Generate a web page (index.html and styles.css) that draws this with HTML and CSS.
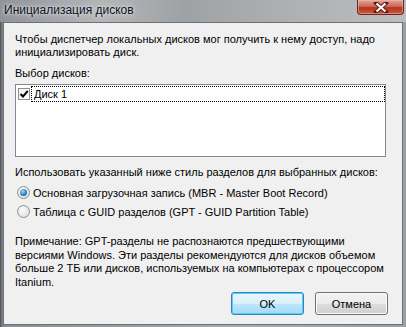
FILE: index.html
```html
<!DOCTYPE html>
<html lang="ru">
<head>
    <meta charset="UTF-8">
    <title>Инициализация дисков</title>
    <link rel="stylesheet" href="styles.css">
</head>
<body>

<div class="window">
    <div class="titlebar">
        <span class="title">Инициализация дисков</span>
        <div class="close-btn">
            <svg width="16" height="11" viewBox="0 0 16 11">
                <path d="M3 1 L13 10 M13 1 L3 10" stroke="#5a1a14" stroke-width="4" stroke-linecap="square"/>
                <path d="M3.5 1.5 L12.5 9.5 M12.5 1.5 L3.5 9.5" stroke="#fff" stroke-width="2.2"/>
            </svg>
        </div>
    </div>

    <div class="client">
        <p class="intro">Чтобы диспетчер локальных дисков мог получить к нему доступ, надо инициализировать диск.</p>

        <div class="label">Выбор дисков:</div>
        <div class="listbox">
            <div class="list-item">
                <span class="checkbox">
                    <svg width="10" height="10" viewBox="0 0 10 10">
                        <path d="M1.5 5 L4 7.5 L8.8 1.8" stroke="#000" stroke-width="2" fill="none"/>
                    </svg>
                </span>
                <span class="item-text">Диск 1</span>
            </div>
        </div>

        <div class="label style-label">Использовать указанный ниже стиль разделов для выбранных дисков:</div>
        <div class="radios">
            <label class="radio-row"><span class="radio checked"></span>Основная загрузочная запись (MBR - Master Boot Record)</label>
            <label class="radio-row"><span class="radio"></span>Таблица с GUID разделов (GPT - GUID Partition Table)</label>
        </div>

        <p class="note">Примечание: GPT-разделы не распознаются предшествующими версиями Windows. Эти разделы рекомендуются для дисков объемом больше 2 ТБ или дисков, используемых на компьютерах с процессором Itanium.</p>

        <div class="buttons">
            <button class="btn btn-default">OK</button>
            <button class="btn">Отмена</button>
        </div>
    </div>
</div>

</body>
</html>
```

FILE: styles.css
```css
body {
    margin: 0;
    padding: 0;
    width: 406px;
    height: 327px;
    overflow: hidden;
    font-family: "Liberation Sans", Arial, sans-serif;
    font-size: 11px;
    color: #000;
}
.window {
    width: 406px;
    height: 327px;
    box-sizing: border-box;
    padding: 0 3px 2px 3px;
    background: linear-gradient(90deg, #4f5257 0px, #8a8d92 3px, #a9abae 60%, #9c9ea2 100%);
    display: flex;
    flex-direction: column;
}
.titlebar {
    height: 22px;
    display: flex;
    align-items: flex-start;
    justify-content: space-between;
    background: linear-gradient(90deg, #8f9297 0%, #b4b6b8 25%, #9fa2a4 45%, #adafb0 70%, #bcbdbe 100%);
    margin: 0 -3px;
    padding: 0 2px 0 4px;
}
.title {
    margin-top: 3px;
    font-size: 12px;
    color: #10101a;
    text-shadow: 0 0 6px #dfe3e8, 0 0 3px #e8ebee;
}
.close-btn {
    width: 47px;
    height: 15px;
    box-sizing: border-box;
    border: 1px solid #5e2a24;
    border-top: none;
    border-radius: 0 0 4px 4px;
    background: linear-gradient(180deg, #e0a195 0%, #cf6a5a 45%, #b4321f 55%, #cd5a3c 100%);
    box-shadow: inset 0 0 0 1px rgba(255, 200, 190, 0.45);
    display: flex;
    align-items: center;
    justify-content: center;
}
.client {
    flex: 1;
    background-color: #f0f0f0;
    border: 1px solid #6d7075;
    padding: 10px 12px 0 11px;
}
.intro {
    margin: 0;
    line-height: 13px;
}
.label {
    margin-top: 8px;
    line-height: 13px;
}
.listbox {
    width: 371px;
    height: 73px;
    box-sizing: border-box;
    margin-top: 4px;
    background-color: #fff;
    border: 1px solid #828790;
    padding: 1px 0 0 2px;
}
.list-item {
    display: flex;
    align-items: center;
    height: 16px;
}
.checkbox {
    width: 12px;
    height: 12px;
    box-sizing: border-box;
    border: 1px solid #8e8f8f;
    background: linear-gradient(135deg, #f2f2f2, #fff);
    display: flex;
    align-items: center;
    justify-content: center;
}
.item-text {
    flex: 1;
    margin-left: 1px;
    height: 16px;
    line-height: 15px;
    box-sizing: border-box;
    border: 1px dotted #000;
    padding-left: 2px;
}
.style-label {
    margin-top: 9px;
}
.radios {
    margin-top: 4px;
}
.radio-row {
    display: flex;
    align-items: center;
    height: 19px;
}
.radio {
    width: 13px;
    height: 13px;
    box-sizing: border-box;
    border-radius: 50%;
    border: 1px solid #8e8f8f;
    background: radial-gradient(circle at 40% 35%, #fdfdfd, #d9d9d9);
    margin: 0 3px 0 2px;
    display: flex;
    align-items: center;
    justify-content: center;
}
.radio.checked::after {
    content: "";
    width: 7px;
    height: 7px;
    border-radius: 50%;
    background: radial-gradient(circle at 40% 35%, #a7d9f5, #1f7cc2 60%, #0e4a86);
}
.note {
    margin: 14px 0 0 0;
    line-height: 13.6px;
}
.buttons {
    display: flex;
    justify-content: flex-end;
    gap: 11px;
    margin-top: 3px;
    margin-right: 2px;
}
.btn {
    width: 73px;
    height: 23px;
    font-family: "Liberation Sans", Arial, sans-serif;
    font-size: 11px;
    color: #000;
    border: 1px solid #707070;
    border-radius: 3px;
    background: linear-gradient(180deg, #f2f2f2 0%, #ebebeb 50%, #dddddd 51%, #cfcfcf 100%);
    box-shadow: inset 0 0 0 1px #fcfcfc;
    padding: 0;
}
.btn-default {
    border-color: #3c7fb1;
    background: linear-gradient(180deg, #eaf6fd 0%, #d9f0fc 50%, #bee6fd 51%, #a7d9f5 100%);
    box-shadow: inset 0 0 0 1px #48d4ff;
}
```
